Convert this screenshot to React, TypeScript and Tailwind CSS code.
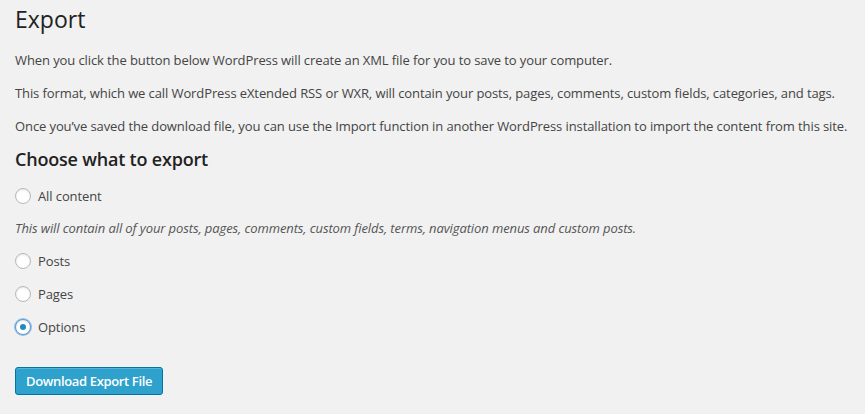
import { useState } from 'react';

const OPTIONS = [
  { id: 'all', label: 'All content' },
  { id: 'posts', label: 'Posts' },
  { id: 'pages', label: 'Pages' },
  { id: 'options', label: 'Options' },
];

function Radio({ checked }: { checked: boolean }) {
  return (
    <span
      className={
        'flex items-center justify-center w-[16px] h-[16px] rounded-full bg-white border shadow-[inset_0_1px_2px_rgba(0,0,0,0.1)] ' +
        (checked ? 'border-[#5b9dd9] ring-1 ring-[#5b9dd9]/60' : 'border-[#b4b9be]')
      }
    >
      {checked && <span className="w-[6px] h-[6px] rounded-full bg-[#1e8cbe]" />}
    </span>
  );
}

function Row({ id, label, value, onPick }: { id: string; label: string; value: string; onPick: (v: string) => void }) {
  return (
    <label className="flex items-center gap-[7px] h-[20px] cursor-pointer" onClick={() => onPick(id)}>
      <Radio checked={value === id} />
      <span>{label}</span>
    </label>
  );
}

export default function App() {
  const [value, setValue] = useState('options');

  return (
    <div
      className="min-h-screen bg-[#f1f1f1] px-[15px] text-[13px] leading-[20px] tracking-[-0.1px] text-[#444]"
      style={{ fontFamily: '"Open Sans", "Noto Sans", sans-serif' }}
    >
      <h2 className="pt-[5px] text-[23px] leading-[29px] tracking-normal text-[#222]">Export</h2>

      <p className="mt-[16px]">When you click the button below WordPress will create an XML file for you to save to your computer.</p>
      <p className="mt-[13px]">
        This format, which we call WordPress eXtended RSS or WXR, will contain your posts, pages, comments, custom fields, categories, and tags.
      </p>
      <p className="mt-[13px]">
        Once you’ve saved the download file, you can use the Import function in another WordPress installation to import the content from this site.
      </p>

      <h3 className="mt-[11px] text-[18px] leading-[24px] font-semibold tracking-[-0.2px] text-[#222]">Choose what to export</h3>

      <div className="mt-[15px]">
        <Row {...OPTIONS[0]} value={value} onPick={setValue} />
      </div>
      <p className="mt-[12px] italic text-[#555]">
        This will contain all of your posts, pages, comments, custom fields, terms, navigation menus and custom posts.
      </p>

      <div className="mt-[13px] flex flex-col gap-[13px]">
        {OPTIONS.slice(1).map((o) => (
          <Row key={o.id} {...o} value={value} onPick={setValue} />
        ))}
      </div>

      <button className="mt-[30px] h-[28px] px-[10px] rounded-[3px] border border-[#0074a2] bg-[#2ea2cc] text-white text-[13px] font-semibold tracking-[-0.35px] shadow-[inset_0_1px_0_rgba(120,200,230,0.5)]">
        Download Export File
      </button>
    </div>
  );
}
